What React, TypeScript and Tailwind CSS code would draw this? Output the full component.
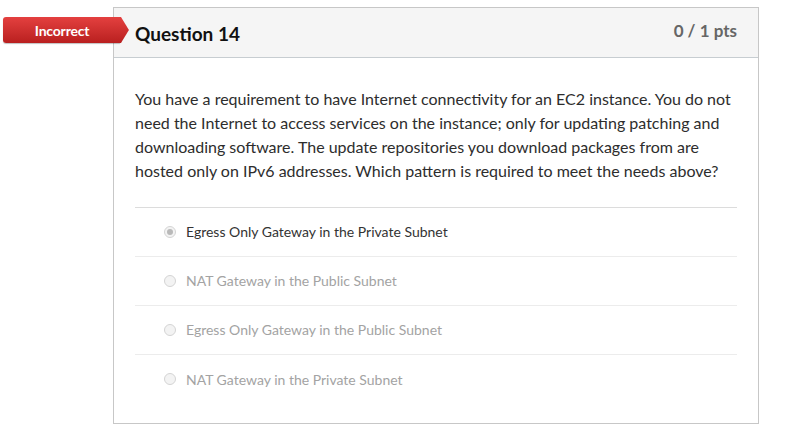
import React from "react";

const ANSWERS = [
  { label: "Egress Only Gateway in the Private Subnet", selected: true },
  { label: "NAT Gateway in the Public Subnet", selected: false },
  { label: "Egress Only Gateway in the Public Subnet", selected: false },
  { label: "NAT Gateway in the Private Subnet", selected: false },
];

function Radio({ checked }: { checked: boolean }) {
  return (
    <span className="grid h-[12px] w-[12px] shrink-0 place-items-center rounded-full border border-[#d4d4d4] bg-[#f3f3f3]">
      {checked ? <span className="h-[6px] w-[6px] rounded-full bg-[#b9b9b9]" /> : null}
    </span>
  );
}

export default function App() {
  return (
    <div className="relative h-[440px] w-[792px] bg-white font-['Lato','Liberation_Sans',sans-serif]">
      <div className="absolute left-[3px] top-[17px] z-10 flex h-[26px] w-[126px]">
        <div className="flex h-full w-[118px] items-center justify-center rounded-l-[3px] bg-gradient-to-b from-[#e4403f] to-[#b91f1f] pl-[1px] text-[14px] font-bold tracking-[-0.2px] text-white shadow-[0_1px_1px_rgba(0,0,0,0.25)]">
          Incorrect
        </div>
        <svg width="9" height="26" viewBox="0 0 9 26" className="block">
          <defs>
            <linearGradient id="tip" x1="0" y1="0" x2="0" y2="1">
              <stop offset="0" stopColor="#e4403f" />
              <stop offset="1" stopColor="#b91f1f" />
            </linearGradient>
          </defs>
          <polygon points="0,0 1,0 9,13 1,26 0,26" fill="url(#tip)" />
        </svg>
      </div>

      <div className="pl-[113px] pt-[7px]">
        <div className="h-[417px] w-[646px] border border-[#c7c7c7] bg-white">
          <div className="flex h-[50px] items-start justify-between border-b border-[#c7cdd1] bg-[#f5f5f5] px-[21px]">
            <h2 className="pt-[12px] text-[19px] font-bold text-[#111]">Question 14</h2>
            <div className="pt-[10px] text-[17px] font-bold text-[#666]">0 / 1 pts</div>
          </div>

          <div className="px-[21px] pt-[29px]">
            <p className="text-[16px] leading-[24px] text-[#2d2d2d]">
              You have a requirement to have Internet connectivity for an EC2 instance. You do not need the
              Internet to access services on the instance; only for updating patching and downloading
              software. The update repositories you download packages from are hosted only on IPv6
              addresses. Which pattern is required to meet the needs above?
            </p>

            <div className="mt-[24px] border-t border-[#dcdcdc]">
              {ANSWERS.map((a, i) => (
                <div
                  key={a.label}
                  className={[
                    "flex h-[49px] items-center gap-[10px] pb-[1px] pl-[29px]",
                    i < ANSWERS.length - 1 ? "border-b border-[#ececec]" : "",
                  ].join(" ")}
                >
                  <Radio checked={a.selected} />
                  <span className={["text-[14px]", a.selected ? "text-[#333]" : "text-[#a3a3a3]"].join(" ")}>
                    {a.label}
                  </span>
                </div>
              ))}
            </div>
          </div>
        </div>
      </div>
    </div>
  );
}
